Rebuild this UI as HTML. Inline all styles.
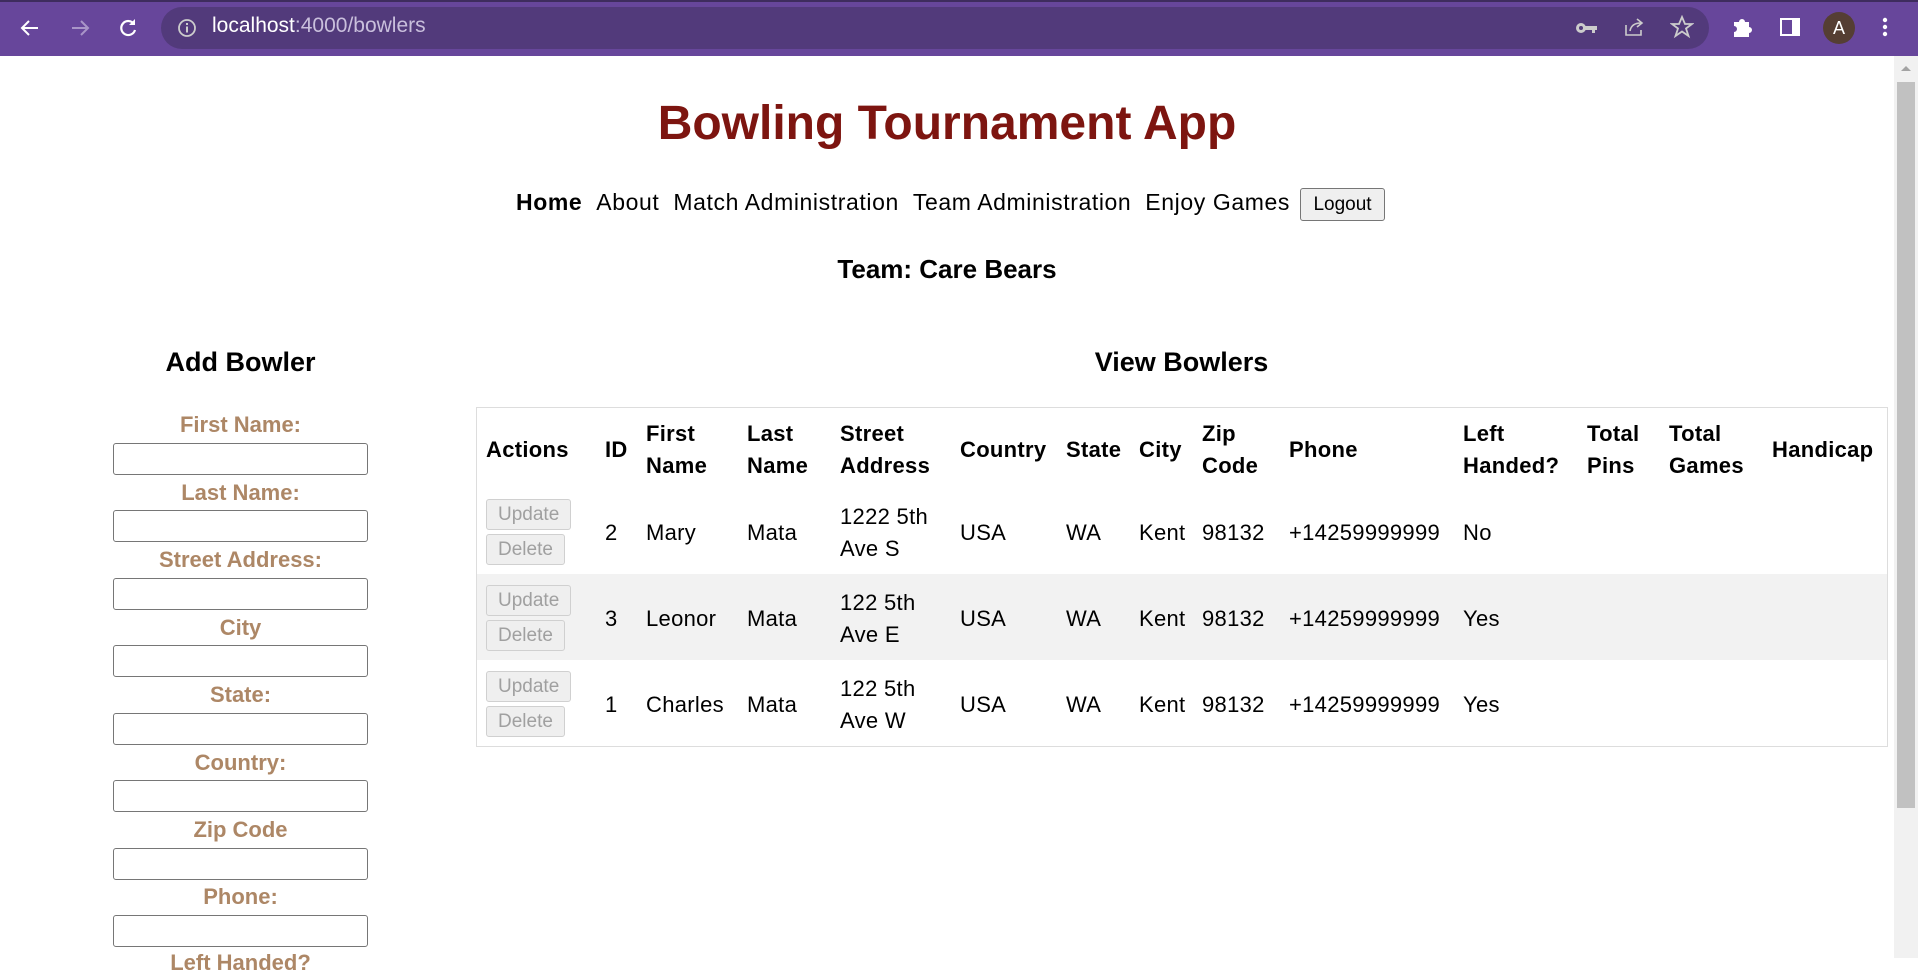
<!DOCTYPE html>
<html><head><meta charset="utf-8"><style>
*{box-sizing:border-box;margin:0;padding:0}
body{width:1918px;height:958px;overflow:hidden;background:#fff;font-family:"Liberation Sans",sans-serif;position:relative;color:#000}
.a{position:absolute;white-space:nowrap}
.top{position:absolute;left:0;top:0;width:1918px;height:56px;background:#67469b}
.strip{position:absolute;left:0;top:0;width:1918px;height:2px;background:#3e2c5e}
.pill{position:absolute;left:161px;top:7px;width:1548px;height:42px;border-radius:21px;background:#523a7b}
.lbl{position:absolute;left:113px;width:255px;text-align:center;color:#ad8766;font-weight:bold;font-size:22px}
.inp{position:absolute;left:113px;width:255px;height:32px;border:1px solid #767676;border-radius:3px;background:#fff}
.th{position:absolute;font-weight:bold;font-size:22px;line-height:32px;letter-spacing:0.3px}
.td{position:absolute;font-size:22px;line-height:32px;letter-spacing:0.3px}
.btn{position:absolute;left:486px;height:31px;border:1px solid #d0d0d0;border-radius:3px;background:#efefef;color:#a0a0a0;font-size:19px;line-height:29px;padding:0 11px}
</style></head><body>
<div class="top"></div><div class="strip"></div>
<svg class="a" style="left:18px;top:16px" width="24" height="24" viewBox="0 0 24 24"><path d="M20 12H5M11 5l-7 7 7 7" stroke="#fff" stroke-width="2" fill="none"/></svg>
<svg class="a" style="left:68px;top:16px" width="24" height="24" viewBox="0 0 24 24"><path d="M4 12h15M13 5l7 7-7 7" stroke="#a995c8" stroke-width="2" fill="none"/></svg>
<svg class="a" style="left:116px;top:16px" width="24" height="24" viewBox="0 0 24 24"><path d="M18 8A7 7 0 1 0 19 14" stroke="#fff" stroke-width="2.2" fill="none"/><path d="M19 3v6h-6z" fill="#fff"/></svg>
<div class="pill"></div>
<svg class="a" style="left:177px;top:18px" width="20" height="20" viewBox="0 0 20 20"><circle cx="10" cy="10" r="8" stroke="#ccc" stroke-width="1.8" fill="none"/><rect x="9" y="8.5" width="2" height="6" fill="#ccc"/><rect x="9" y="5" width="2" height="2" fill="#ccc"/></svg>
<div class="a" style="left:212px;top:14px;font-size:21px;color:#fff">localhost<span style="color:#c9bfdc">:4000/bowlers</span></div>
<svg class="a" style="left:1574px;top:18px" width="24" height="20" viewBox="0 0 24 20"><circle cx="7" cy="10" r="5" fill="#ccc"/><circle cx="7" cy="10" r="2" fill="#523a7b"/><path d="M11 8h12v4h-2v3h-3v-3h-7z" fill="#ccc"/></svg>
<svg class="a" style="left:1622px;top:15px" width="24" height="24" viewBox="0 0 24 24"><path d="M4 10v10h15v-5M8 16c1-6 5-8 11-8M15 4l5 4-5 4" stroke="#ccc" stroke-width="1.6" fill="none"/></svg>
<svg class="a" style="left:1670px;top:15px" width="24" height="24" viewBox="0 0 24 24"><path d="M12 2l3 7h7l-6 4.5 2.5 7.5-6.5-4.5-6.5 4.5 2.5-7.5-6-4.5h7z" stroke="#ccc" stroke-width="1.8" fill="none"/></svg>
<svg class="a" style="left:1730px;top:15px" width="24" height="24" viewBox="0 0 24 24"><path d="M4 7h5a3 3 0 0 1 6 0h4v5a3 3 0 0 1 0 6v4H4v-5a3 3 0 0 0 0-6z" fill="#fff"/></svg>
<svg class="a" style="left:1778px;top:15px" width="24" height="24" viewBox="0 0 24 24"><rect x="3" y="4" width="18" height="16" stroke="#fff" stroke-width="2" fill="none"/><rect x="14" y="4" width="7" height="16" fill="#fff"/></svg>
<div class="a" style="left:1823px;top:12px;width:32px;height:32px;border-radius:50%;background:#553e33;color:#fff;font-size:18px;text-align:center;line-height:32px">A</div>
<svg class="a" style="left:1877px;top:15px" width="16" height="24" viewBox="0 0 16 24"><circle cx="8" cy="5" r="2.2" fill="#fff"/><circle cx="8" cy="12" r="2.2" fill="#fff"/><circle cx="8" cy="19" r="2.2" fill="#fff"/></svg>
<div class="a" style="left:1894px;top:56px;width:24px;height:902px;background:#f1f1f1"></div>
<div class="a" style="left:1897px;top:82px;width:18px;height:726px;background:#c1c1c1"></div>
<svg class="a" style="left:1899px;top:63px" width="14" height="10"><path d="M2 8h10L7 3z" fill="#a3a3a3"/></svg>

<div class="a" style="left:0;width:1894px;top:96px;text-align:center;font-size:48px;font-weight:bold;color:#7d1510">Bowling Tournament App</div>
<div class="a" style="left:516px;top:189px;font-size:23px;letter-spacing:0.6px"><b>Home</b>&nbsp;&nbsp;About&nbsp;&nbsp;Match Administration&nbsp;&nbsp;Team Administration&nbsp;&nbsp;Enjoy Games</div>
<div class="a" style="left:1300px;top:188px;width:85px;height:33px;border:1px solid #767676;border-radius:3px;background:#efefef;font-size:19px;text-align:center;line-height:31px">Logout</div>
<div class="a" style="left:0;width:1894px;top:254px;text-align:center;font-size:26px;font-weight:bold">Team: Care Bears</div>
<div class="a" style="left:113px;width:255px;top:347px;text-align:center;font-size:27px;font-weight:bold">Add Bowler</div>
<div class="a" style="left:476px;width:1411px;top:347px;text-align:center;font-size:27px;font-weight:bold">View Bowlers</div>

<div class="lbl" style="top:412px">First Name:</div><div class="inp" style="top:443px"></div>
<div class="lbl" style="top:480px">Last Name:</div><div class="inp" style="top:510px"></div>
<div class="lbl" style="top:547px">Street Address:</div><div class="inp" style="top:578px"></div>
<div class="lbl" style="top:615px">City</div><div class="inp" style="top:645px"></div>
<div class="lbl" style="top:682px">State:</div><div class="inp" style="top:713px"></div>
<div class="lbl" style="top:750px">Country:</div><div class="inp" style="top:780px"></div>
<div class="lbl" style="top:817px">Zip Code</div><div class="inp" style="top:848px"></div>
<div class="lbl" style="top:884px">Phone:</div><div class="inp" style="top:915px"></div>
<div class="lbl" style="top:950px">Left Handed?</div>

<div class="a" style="left:476px;top:407px;width:1412px;height:340px;border:1px solid #ddd"></div>
<div class="a" style="left:477px;top:574px;width:1410px;height:86px;background:#f2f2f2"></div>
<div class="th" style="left:486px;top:434px">Actions</div>
<div class="th" style="left:605px;top:434px">ID</div>
<div class="th" style="left:646px;top:418px">First<br>Name</div>
<div class="th" style="left:747px;top:418px">Last<br>Name</div>
<div class="th" style="left:840px;top:418px">Street<br>Address</div>
<div class="th" style="left:960px;top:434px">Country</div>
<div class="th" style="left:1066px;top:434px">State</div>
<div class="th" style="left:1139px;top:434px">City</div>
<div class="th" style="left:1202px;top:418px">Zip<br>Code</div>
<div class="th" style="left:1289px;top:434px">Phone</div>
<div class="th" style="left:1463px;top:418px">Left<br>Handed?</div>
<div class="th" style="left:1587px;top:418px">Total<br>Pins</div>
<div class="th" style="left:1669px;top:418px">Total<br>Games</div>
<div class="th" style="left:1772px;top:434px">Handicap</div>

<div class="btn" style="top:499px">Update</div><div class="btn" style="top:534px">Delete</div>
<div class="td" style="left:605px;top:517px">2</div><div class="td" style="left:646px;top:517px">Mary</div><div class="td" style="left:747px;top:517px">Mata</div><div class="td" style="left:840px;top:501px">1222 5th<br>Ave S</div><div class="td" style="left:960px;top:517px">USA</div><div class="td" style="left:1066px;top:517px">WA</div><div class="td" style="left:1139px;top:517px">Kent</div><div class="td" style="left:1202px;top:517px">98132</div><div class="td" style="left:1289px;top:517px">+14259999999</div><div class="td" style="left:1463px;top:517px">No</div>

<div class="btn" style="top:585px">Update</div><div class="btn" style="top:620px">Delete</div>
<div class="td" style="left:605px;top:603px">3</div><div class="td" style="left:646px;top:603px">Leonor</div><div class="td" style="left:747px;top:603px">Mata</div><div class="td" style="left:840px;top:587px">122 5th<br>Ave E</div><div class="td" style="left:960px;top:603px">USA</div><div class="td" style="left:1066px;top:603px">WA</div><div class="td" style="left:1139px;top:603px">Kent</div><div class="td" style="left:1202px;top:603px">98132</div><div class="td" style="left:1289px;top:603px">+14259999999</div><div class="td" style="left:1463px;top:603px">Yes</div>

<div class="btn" style="top:671px">Update</div><div class="btn" style="top:706px">Delete</div>
<div class="td" style="left:605px;top:689px">1</div><div class="td" style="left:646px;top:689px">Charles</div><div class="td" style="left:747px;top:689px">Mata</div><div class="td" style="left:840px;top:673px">122 5th<br>Ave W</div><div class="td" style="left:960px;top:689px">USA</div><div class="td" style="left:1066px;top:689px">WA</div><div class="td" style="left:1139px;top:689px">Kent</div><div class="td" style="left:1202px;top:689px">98132</div><div class="td" style="left:1289px;top:689px">+14259999999</div><div class="td" style="left:1463px;top:689px">Yes</div>
</body></html>
